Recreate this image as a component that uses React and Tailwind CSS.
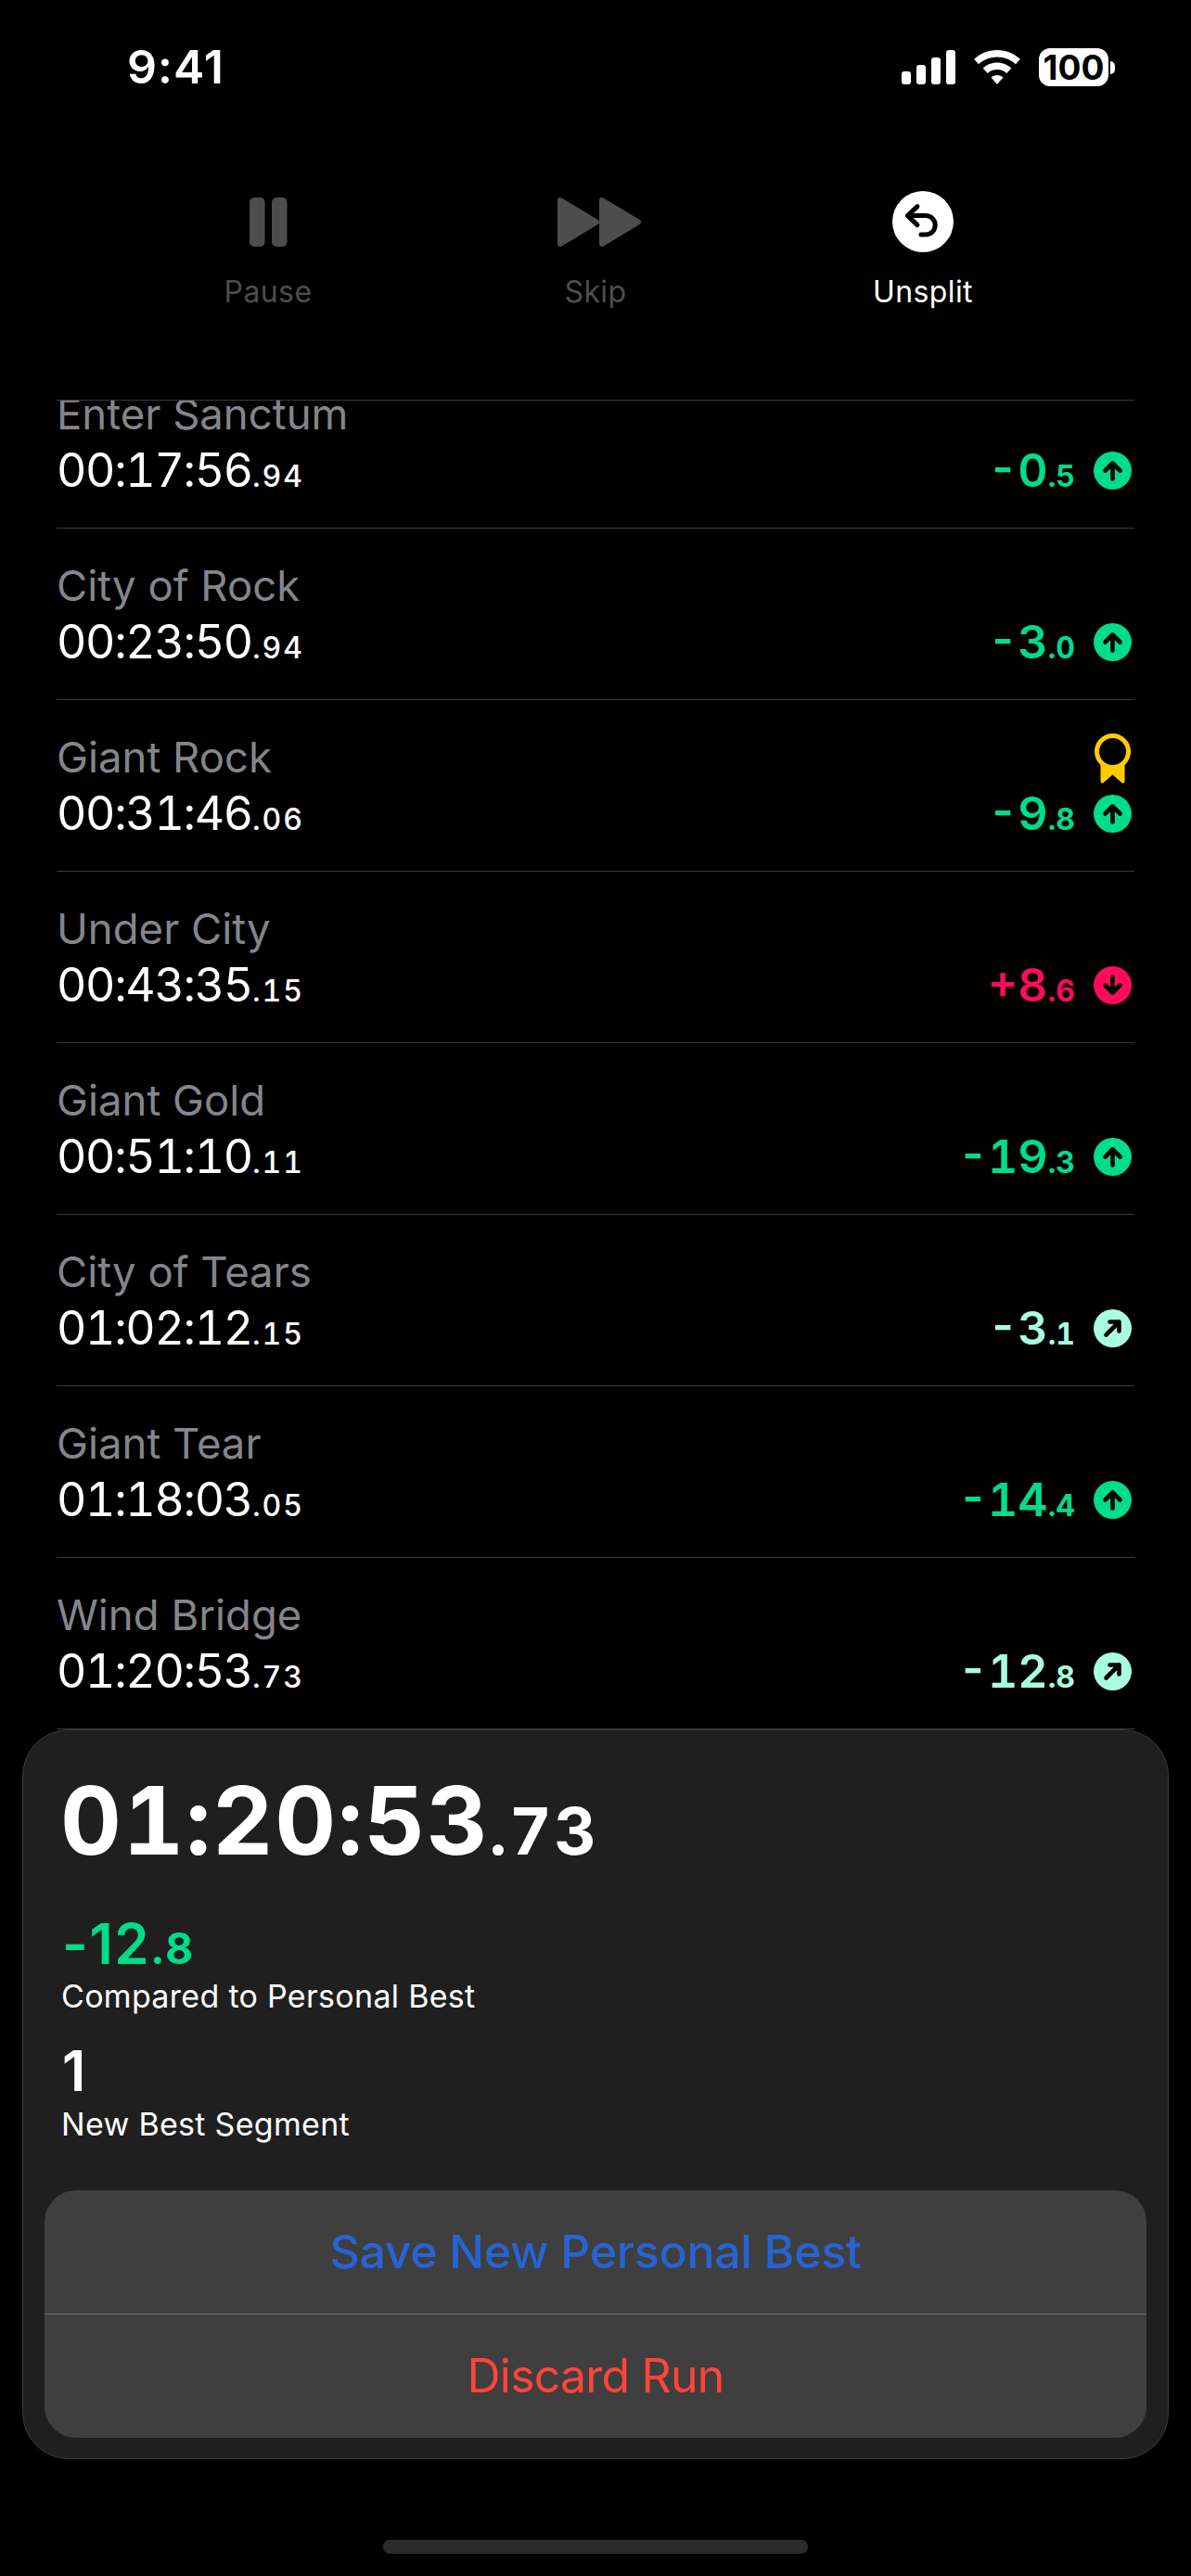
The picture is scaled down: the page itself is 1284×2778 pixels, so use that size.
import React from "react";

const GREEN = "text-[#00dc8c]";
const MINT = "text-[#a8ffe0]";
const RED = "text-[#ff0a5c]";

function Badge({ kind }) {
  const bg = kind === "up" ? "#00dc8c" : kind === "down" ? "#ff0a5c" : "#a8ffe0";
  return (
    <svg width="41" height="41" viewBox="0 0 41 41" className="shrink-0">
      <circle cx="20.5" cy="20.5" r="20.5" fill={bg} />
      <g fill="none" stroke="#000" strokeWidth="4.6" strokeLinecap="round" strokeLinejoin="round">
        {kind === "up" && <path d="M20.5 29.5V12.500M12.500 20.500l8-8 8 8" />}
        {kind === "down" && <path d="M20.500 11.500v17M12.500 20.500l8 8 8-8" />}
        {kind === "diag" && <path d="M13.500 27.500L27.500 13.500M17.500 13.500h10v10" />}
      </g>
    </svg>
  );
}

function Medal() {
  return (
    <svg width="41" height="54" viewBox="0 0 41 54" className="block">
      <path d="M7.500 30v21.500c0 2 2 2.600 3.200 1.500l9.800-8.500 9.800 8.500c1.200 1.100 3.200.5 3.200-1.500V30z" fill="#ffcc00" />
      <circle cx="20.500" cy="19.500" r="17" fill="#000" stroke="#ffcc00" strokeWidth="5" />
    </svg>
  );
}

function Row({ name, main, dec, sign, dmain, ddec, color, kind, medal, first }) {
  return (
    <div
      className={`h-[185px] shrink-0 border-b border-[#3a3a3a] pt-[34px] pr-[3px] grid grid-cols-[1fr_auto] grid-rows-[56px_56px] gap-y-[4px] ${first ? "mt-[-47px]" : ""}`}
    >
      <div className="leading-[56px] text-[45.5px] text-[#85858b] whitespace-nowrap">{name}</div>
      <div className="flex items-end justify-end">{medal && <Medal />}</div>
      <div className="leading-[56px] text-[50px] text-white whitespace-nowrap tracking-[-1.3px] [font-variant-numeric:tabular-nums]">
        {main}
        <span className="text-[32px] leading-none font-medium tracking-[2px]">.{dec}</span>
      </div>
      <div className="flex items-center justify-end gap-[20px]">
        <div className={`leading-[56px] text-[50px] font-semibold whitespace-nowrap [font-variant-numeric:tabular-nums] ${color}`}>
          {sign}
          {dmain}
          <span className="text-[32px] leading-none font-bold">.{ddec}</span>
        </div>
        <Badge kind={kind} />
      </div>
    </div>
  );
}

const rows = [
  { name: "Enter Sanctum", main: "00:17:56", dec: "94", sign: "-", dmain: "0", ddec: "5", color: GREEN, kind: "up", first: true },
  { name: "City of Rock", main: "00:23:50", dec: "94", sign: "-", dmain: "3", ddec: "0", color: GREEN, kind: "up" },
  { name: "Giant Rock", main: "00:31:46", dec: "06", sign: "-", dmain: "9", ddec: "8", color: GREEN, kind: "up", medal: true },
  { name: "Under City", main: "00:43:35", dec: "15", sign: "+", dmain: "8", ddec: "6", color: RED, kind: "down" },
  { name: "Giant Gold", main: "00:51:10", dec: "11", sign: "-", dmain: "19", ddec: "3", color: GREEN, kind: "up" },
  { name: "City of Tears", main: "01:02:12", dec: "15", sign: "-", dmain: "3", ddec: "1", color: MINT, kind: "diag" },
  { name: "Giant Tear", main: "01:18:03", dec: "05", sign: "-", dmain: "14", ddec: "4", color: GREEN, kind: "up" },
  { name: "Wind Bridge", main: "01:20:53", dec: "73", sign: "-", dmain: "12", ddec: "8", color: MINT, kind: "diag" },
];

function StatusBar() {
  return (
    <div className="h-[150px] flex items-start justify-between pl-[137px] pr-[82px] pt-[42px]">
      <div className="text-[50px] leading-[60px] font-semibold text-white tracking-[1px]">9:41</div>
      <div className="flex items-center gap-[20px] pt-[10px]">
        <svg width="58" height="37" viewBox="0 0 58 37" fill="#fff">
          <rect x="0" y="23" width="10" height="14" rx="3" />
          <rect x="16" y="16" width="10" height="21" rx="3" />
          <rect x="32" y="8" width="10" height="29" rx="3" />
          <rect x="48" y="0" width="10" height="37" rx="3" />
        </svg>
        <svg width="50" height="37" viewBox="0 0 50 37" fill="#fff">
          <path d="M25 0c9.600 0 18.300 3.700 24.900 9.800L45 15.200C39.800 10.400 32.800 7.400 25 7.400S10.200 10.400 5 15.200L0.100 9.800C6.700 3.700 15.400 0 25 0z" />
          <path d="M25 13.600c5.900 0 11.300 2.300 15.300 6L35.300 25c-2.700-2.500-6.300-4-10.300-4s-7.600 1.500-10.300 4L9.700 19.600c4-3.700 9.400-6 15.300-6z" />
          <path d="M25 27c2.500 0 4.800 1 6.500 2.500L25 37l-6.500-7.500C20.200 28 22.500 27 25 27z" />
        </svg>
        <div className="flex items-center">
          <div className="w-[75px] h-[41px] rounded-[12px] bg-white flex items-center justify-center text-[37px] leading-[41px] font-bold text-black">
            100
          </div>
          <div className="ml-[2px] w-[5px] h-[14px] rounded-r-full bg-white" />
        </div>
      </div>
    </div>
  );
}

function Actions() {
  const label = "text-[32px] leading-[40px] tracking-[0.4px]";
  return (
    <div className="grid grid-cols-3 w-[1059px] mx-auto h-[281px] content-start">
      <div className="flex flex-col items-center">
        <div className="h-[145px] pt-[63px]">
          <svg width="41" height="53" viewBox="0 0 41 53" fill="#4d4d4d" className="block">
            <rect x="0" y="0" width="16.500" height="53" rx="5" />
            <rect x="24" y="0" width="16.500" height="53" rx="5" />
          </svg>
        </div>
        <div className={`${label} text-[#4d4d4d]`}>Pause</div>
      </div>
      <div className="flex flex-col items-center">
        <div className="h-[145px] pt-[63px] pl-[8px]">
          <svg width="90" height="53" viewBox="0 0 90 53" fill="#4d4d4d" stroke="#4d4d4d" strokeWidth="6" strokeLinejoin="round" className="block">
            <path d="M3 3L42 26.500 3 50z" />
            <path d="M48 3L87 26.500 48 50z" />
          </svg>
        </div>
        <div className={`${label} text-[#4d4d4d]`}>Skip</div>
      </div>
      <div className="flex flex-col items-center">
        <div className="h-[145px] pt-[56px]">
          <svg width="66" height="66" viewBox="0 0 66 66" className="block">
            <circle cx="33" cy="33" r="33" fill="#fff" />
            <path
              d="M27 16.600L16.500 26.600 27 36.600M16.500 26.600H36a10.200 10.200 0 0 1 0 20.400H31"
              fill="none"
              stroke="#000"
              strokeWidth="5"
              strokeLinecap="round"
              strokeLinejoin="round"
            />
          </svg>
        </div>
        <div className={`${label} text-white`}>Unsplit</div>
      </div>
    </div>
  );
}

function Panel() {
  return (
    <div className="mx-[24px] h-[787px] rounded-[50px] bg-[#1f1f1f] border border-[#3a3a3a] pt-[32px] flex flex-col">
      <div className="pl-[40px] h-[130px] leading-[130px] text-[102px] font-bold text-white whitespace-nowrap tracking-[1.5px] [font-variant-numeric:tabular-nums]">
        01:20:53<span className="text-[70px] leading-none tracking-[3px]">.73</span>
      </div>
      <div className={`pl-[42px] mt-[33px] h-[70px] leading-[70px] text-[60px] font-semibold tracking-[1.5px] ${GREEN}`}>
        -12<span className="text-[46px] leading-none font-bold tracking-[2px]">.8</span>
      </div>
      <div className="pl-[41px] mt-[2px] h-[40px] leading-[40px] text-[34px] text-white tracking-[0.3px]">Compared to Personal Best</div>
      <div className="pl-[42px] mt-[25px] h-[70px] leading-[70px] text-[60px] font-semibold text-white">1</div>
      <div className="pl-[41px] mt-[3px] h-[40px] leading-[40px] text-[34px] text-white tracking-[0.3px]">New Best Segment</div>
      <div className="mx-[23px] mt-[51px] h-[267px] rounded-[34px] bg-[#3f3f3f] overflow-hidden flex flex-col">
        <div className="h-[134px] border-b border-[#6b6b6b] flex items-center justify-center text-[50px] font-medium tracking-[-0.3px] text-[#2863d2]">
          Save New Personal Best
        </div>
        <div className="flex-1 flex items-center justify-center text-[50px] tracking-[-0.8px] text-[#ff453a]">Discard Run</div>
      </div>
    </div>
  );
}

export default function App() {
  return (
    <div className="w-[1284px] h-[2778px] bg-black overflow-hidden font-['Inter',sans-serif]">
      <StatusBar />
      <Actions />
      <div className="h-[1434px] mx-[61px] border-t border-[#3a3a3a] overflow-hidden flex flex-col">
        {rows.map((r) => (
          <Row key={r.name} {...r} />
        ))}
      </div>
      <Panel />
      <div className="mt-[87px] mx-auto w-[458px] h-[15px] rounded-[7px] bg-[#2b2b2b]" />
    </div>
  );
}
